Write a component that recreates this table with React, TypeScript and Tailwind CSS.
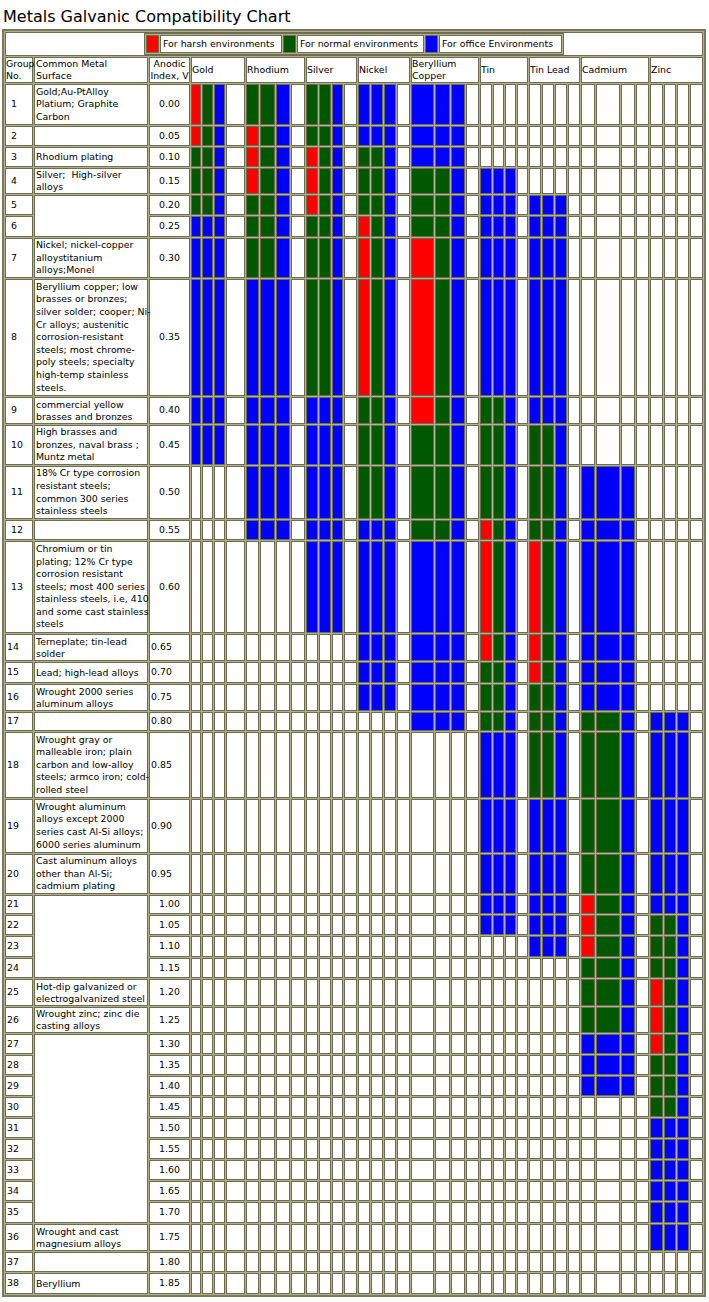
import React from 'react';

type Range = [number, number, string];

const metals: { name: string[]; ranges: Range[] }[] = [
  { name: ['Gold'], ranges: [[1, 2, 'RGB'], [3, 5, 'GGB'], [6, 10, 'BBB']] },
  { name: ['Rhodium'], ranges: [[1, 1, 'GGB'], [2, 4, 'RGB'], [5, 7, 'GGB'], [8, 12, 'BBB']] },
  { name: ['Silver'], ranges: [[1, 2, 'GGB'], [3, 5, 'RGB'], [6, 8, 'GGB'], [9, 13, 'BBB']] },
  { name: ['Nickel'], ranges: [[1, 2, 'BBB'], [3, 5, 'GGB'], [6, 8, 'RGB'], [9, 11, 'GGB'], [12, 16, 'BBB']] },
  { name: ['Beryllium', 'Copper'], ranges: [[1, 3, 'BBB'], [4, 6, 'GGB'], [7, 9, 'RGB'], [10, 12, 'GGB'], [13, 17, 'BBB']] },
  { name: ['Tin'], ranges: [[4, 8, 'BBB'], [9, 11, 'GGB'], [12, 14, 'RGB'], [15, 17, 'GGB'], [18, 22, 'BBB']] },
  { name: ['Tin Lead'], ranges: [[5, 9, 'BBB'], [10, 12, 'GGB'], [13, 15, 'RGB'], [16, 18, 'GGB'], [19, 23, 'BBB']] },
  { name: ['Cadmium'], ranges: [[11, 16, 'BBB'], [17, 20, 'GGB'], [21, 23, 'RGB'], [24, 26, 'GGB'], [27, 29, 'BBB']] },
  { name: ['Zinc'], ranges: [[17, 21, 'BBB'], [22, 24, 'GGB'], [25, 27, 'RGB'], [28, 30, 'GGB'], [31, 36, 'BBB']] },
];

// surface text, keyed by the first row it covers
const surfaces: Record<number, { span: number; lines: string[] }> = {
  1: { span: 1, lines: ['Gold;Au-PtAlloy', 'Platium; Graphite', 'Carbon'] },
  2: { span: 1, lines: [] },
  3: { span: 1, lines: ['Rhodium plating'] },
  4: { span: 1, lines: ['Silver;  High-silver', 'alloys'] },
  5: { span: 2, lines: [] },
  7: { span: 1, lines: ['Nickel; nickel-copper', 'alloystitanium', 'alloys;Monel'] },
  8: {
    span: 1,
    lines: [
      'Beryllium copper; low',
      'brasses or bronzes;',
      'silver solder; cooper; Ni-',
      'Cr alloys; austenitic',
      'corrosion-resistant',
      'steels; most chrome-',
      'poly steels; specialty',
      'high-temp stainless',
      'steels.',
    ],
  },
  9: { span: 1, lines: ['commercial yellow', 'brasses and bronzes'] },
  10: { span: 1, lines: ['High brasses and', 'bronzes, naval brass ;', 'Muntz metal'] },
  11: { span: 1, lines: ['18% Cr type corrosion', 'resistant steels;', 'common 300 series', 'stainless steels'] },
  12: { span: 1, lines: [] },
  13: {
    span: 1,
    lines: [
      'Chromium or tin',
      'plating; 12% Cr type',
      'corrosion resistant',
      'steels; most 400 series',
      'stainless steels, i.e, 410',
      'and some cast stainless',
      'steels',
    ],
  },
  14: { span: 1, lines: ['Terneplate; tin-lead', 'solder'] },
  15: { span: 1, lines: ['Lead; high-lead alloys'] },
  16: { span: 1, lines: ['Wrought 2000 series', 'aluminum alloys'] },
  17: { span: 1, lines: [] },
  18: {
    span: 1,
    lines: ['Wrought gray or', 'malleable iron; plain', 'carbon and low-alloy', 'steels; armco iron; cold-', 'rolled steel'],
  },
  19: { span: 1, lines: ['Wrought aluminum', 'alloys except 2000', 'series cast Al-Si alloys;', '6000 series aluminum'] },
  20: { span: 1, lines: ['Cast aluminum alloys', 'other than Al-Si;', 'cadmium plating'] },
  21: { span: 4, lines: [] },
  25: { span: 1, lines: ['Hot-dip galvanized or', 'electrogalvanized steel'] },
  26: { span: 1, lines: ['Wrought zinc; zinc die', 'casting alloys'] },
  27: { span: 9, lines: [] },
  36: { span: 1, lines: ['Wrought and cast', 'magnesium alloys'] },
  37: { span: 1, lines: [] },
  38: { span: 1, lines: ['Beryllium'] },
};

const rowH = [
  'h-[41px]', 'h-[20px]', 'h-[20px]', 'h-[26px]', 'h-[20px]', 'h-[21px]', 'h-[40px]', 'h-[117px]',
  'h-[27px]', 'h-[40px]', 'h-[53px]', 'h-[20px]', 'h-[92px]', 'h-[27px]', 'h-[21px]', 'h-[27px]',
  'h-[19px]', 'h-[66px]', 'h-[54px]', 'h-[40px]', 'h-[19px]', 'h-[20px]', 'h-[21px]', 'h-[20px]',
  'h-[27px]', 'h-[26px]', 'h-[20px]', 'h-[20px]', 'h-[20px]', 'h-[20px]', 'h-[20px]', 'h-[20px]',
  'h-[20px]', 'h-[20px]', 'h-[21px]', 'h-[27px]', 'h-[20px]', 'h-[21px]',
];

const cols = [
  'w-[28px]', 'w-[114px]', 'w-[41px]',
  'w-[10px]', 'w-[11px]', 'w-[11px]', 'w-[19px]',
  'w-[13px]', 'w-[15px]', 'w-[14px]', 'w-[14px]',
  'w-[12px]', 'w-[12px]', 'w-[11px]', 'w-[13px]',
  'w-[12px]', 'w-[12px]', 'w-[12px]', 'w-[13px]',
  'w-[23px]', 'w-[15px]', 'w-[14px]', 'w-[13px]',
  'w-[12px]', 'w-[11px]', 'w-[11px]', 'w-[11px]',
  'w-[12px]', 'w-[12px]', 'w-[12px]', 'w-[12px]',
  'w-[14px]', 'w-[24px]', 'w-[14px]', 'w-[13px]',
  'w-[13px]', 'w-[12px]', 'w-[12px]', 'w-[13px]',
];

const fill: Record<string, string> = {
  R: 'bg-[#ff0000]',
  G: 'bg-[#005800]',
  B: 'bg-[#0000ff]',
};

const cell = 'border border-[#6e6e4e] p-0';

const Lines: React.FC<{ lines: string[] }> = ({ lines }) => (
  <>
    {lines.map((l, i) => (
      <React.Fragment key={i}>
        {i > 0 && <br />}
        {l}
      </React.Fragment>
    ))}
  </>
);

const Legend: React.FC = () => (
  <table className="mx-auto border-separate border-spacing-[1px] border border-[#6e6e4e] bg-[#b3af93]">
    <tbody>
      <tr className="h-[18px]">
        <td className={`${cell} w-[13px] bg-[#ff0000]`} />
        <td className={`${cell} w-[122px] bg-white pl-[2px] whitespace-pre`}>For harsh environments</td>
        <td className={`${cell} w-[13px] bg-[#005800]`} />
        <td className={`${cell} w-[127px] bg-white pl-[2px] whitespace-pre`}>For normal environments</td>
        <td className={`${cell} w-[13px] bg-[#0000ff]`} />
        <td className={`${cell} w-[123px] bg-white pl-[2px] whitespace-pre`}>For office Environments</td>
      </tr>
    </tbody>
  </table>
);

export default function App() {
  const rows = Array.from({ length: 38 }, (_, i) => i + 1);
  return (
    <div className="min-h-screen bg-white text-black font-['DejaVu_Sans',sans-serif]">
      <div className="h-[29px] pl-[3px] pt-[8px] text-[16px] leading-[18px]">Metals Galvanic Compatibility Chart</div>
      <table className="ml-[2px] w-[703px] table-fixed border-separate border-spacing-[1px] border-2 border-[#7a7a5c] bg-[#b3af93] text-[9.4px]">
        <colgroup>
          {cols.map((w, i) => (
            <col key={i} className={w} />
          ))}
        </colgroup>
        <tbody>
          <tr className="h-[23px]">
            <td colSpan={39} className={`${cell} bg-white`}>
              <Legend />
            </td>
          </tr>
          <tr className="h-[26px] leading-[12px]">
            <td className={`${cell} bg-white whitespace-pre`}>Group<br />No.</td>
            <td className={`${cell} bg-white whitespace-pre pl-[1px]`}>Common Metal<br />Surface</td>
            <td className={`${cell} bg-white whitespace-pre text-center`}>Anodic<br />Index, V</td>
            {metals.map((m) => (
              <td key={m.name.join()} colSpan={4} className={`${cell} bg-white whitespace-pre`}>
                <Lines lines={m.name} />
              </td>
            ))}
          </tr>
          {rows.map((r) => {
            const s = surfaces[r];
            return (
              <tr key={r} className={rowH[r - 1]}>
                <td className={`${cell} bg-white ${r <= 13 ? 'pl-[5px]' : 'pl-[1px]'}`}>{r}</td>
                {s && (
                  <td
                    rowSpan={s.span}
                    className={`${cell} bg-white whitespace-pre pl-[1px] ${s.lines.length > 2 ? 'leading-[12.6px]' : 'leading-[12px]'}`}
                  >
                    <Lines lines={s.lines} />
                  </td>
                )}
                <td className={`${cell} bg-white ${r >= 14 && r <= 20 ? 'pl-[1px]' : 'text-center'}`}>
                  {((r - 1) * 0.05).toFixed(2)}
                </td>
                {metals.map((m) => {
                  const hit = m.ranges.find(([a, b]) => r >= a && r <= b);
                  const pat = hit ? hit[2] : '';
                  return [0, 1, 2, 3].map((k) => (
                    <td key={m.name.join() + k} className={`${cell} ${fill[pat[k]] ?? 'bg-white'}`} />
                  ));
                })}
              </tr>
            );
          })}
        </tbody>
      </table>
    </div>
  );
}
